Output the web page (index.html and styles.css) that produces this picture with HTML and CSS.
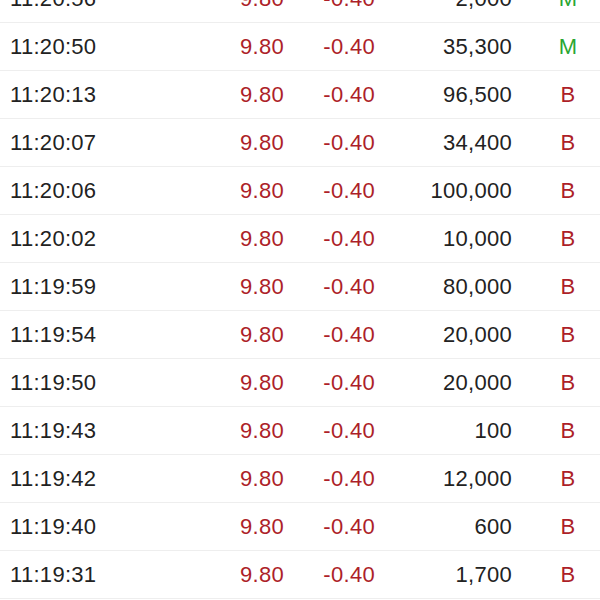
FILE: index.html
```
<!DOCTYPE html>
<html lang="en">
<head>
  <meta charset="UTF-8" />
  <meta name="viewport" content="width=device-width, initial-scale=1.0" />
  <title>Trades</title>
  <link rel="stylesheet" href="styles.css">
</head>
<body>
  <div class="trades">
    <div class="row"><span class="time">11:20:56</span><span class="price down">9.80</span><span class="change down">-0.40</span><span class="vol">2,000</span><span class="side up">M</span></div>
    <div class="row"><span class="time">11:20:50</span><span class="price down">9.80</span><span class="change down">-0.40</span><span class="vol">35,300</span><span class="side up">M</span></div>
    <div class="row"><span class="time">11:20:13</span><span class="price down">9.80</span><span class="change down">-0.40</span><span class="vol">96,500</span><span class="side down">B</span></div>
    <div class="row"><span class="time">11:20:07</span><span class="price down">9.80</span><span class="change down">-0.40</span><span class="vol">34,400</span><span class="side down">B</span></div>
    <div class="row"><span class="time">11:20:06</span><span class="price down">9.80</span><span class="change down">-0.40</span><span class="vol">100,000</span><span class="side down">B</span></div>
    <div class="row"><span class="time">11:20:02</span><span class="price down">9.80</span><span class="change down">-0.40</span><span class="vol">10,000</span><span class="side down">B</span></div>
    <div class="row"><span class="time">11:19:59</span><span class="price down">9.80</span><span class="change down">-0.40</span><span class="vol">80,000</span><span class="side down">B</span></div>
    <div class="row"><span class="time">11:19:54</span><span class="price down">9.80</span><span class="change down">-0.40</span><span class="vol">20,000</span><span class="side down">B</span></div>
    <div class="row"><span class="time">11:19:50</span><span class="price down">9.80</span><span class="change down">-0.40</span><span class="vol">20,000</span><span class="side down">B</span></div>
    <div class="row"><span class="time">11:19:43</span><span class="price down">9.80</span><span class="change down">-0.40</span><span class="vol">100</span><span class="side down">B</span></div>
    <div class="row"><span class="time">11:19:42</span><span class="price down">9.80</span><span class="change down">-0.40</span><span class="vol">12,000</span><span class="side down">B</span></div>
    <div class="row"><span class="time">11:19:40</span><span class="price down">9.80</span><span class="change down">-0.40</span><span class="vol">600</span><span class="side down">B</span></div>
    <div class="row"><span class="time">11:19:31</span><span class="price down">9.80</span><span class="change down">-0.40</span><span class="vol">1,700</span><span class="side down">B</span></div>
  </div>
</body>
</html>
```

FILE: styles.css
```
html, body {
  margin: 0;
  padding: 0;
  background-color: #fff;
  font-family: 'Liberation Sans', Arial, sans-serif;
  overflow: hidden;
}

.trades {
  margin-top: -25px;
}

.row {
  display: grid;
  grid-template-columns: 1fr 88px 91px 161px 64px;
  align-items: center;
  height: 47px;
  padding-left: 10px;
  border-bottom: 1px solid #eeeeee;
  font-size: 22px;
  letter-spacing: 0.3px;
  color: #222;
}

.price,
.change {
  text-align: right;
}

.vol {
  text-align: right;
  padding-right: 24px;
}

.side {
  text-align: center;
}

.down {
  color: #ad1f29;
}

.up {
  color: #2aa632;
}
```
